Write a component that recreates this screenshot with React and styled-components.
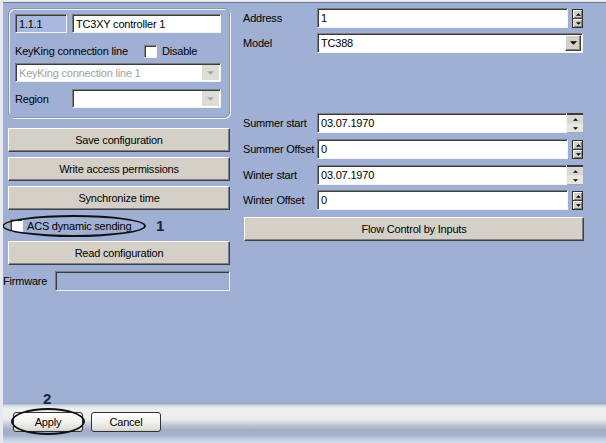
import React from "react";
import styled, { createGlobalStyle } from "styled-components";

const GlobalStyle = createGlobalStyle`
  html, body {
    margin: 0;
    padding: 0;
    background: #9fb0d4;
  }
  * {
    box-sizing: border-box;
  }
`;

const FONT = `"Liberation Sans", Arial, sans-serif`;

const Window = styled.div`
  width: 606px;
  height: 443px;
  background: #9fb0d4;
  border-left: 3px solid #e6eaf0;
  border-top: 2px solid #e6eaf0;
  display: flex;
  flex-direction: column;
  font-family: ${FONT};
  font-size: 11px;
  letter-spacing: -0.2px;
  color: #000;
  overflow: hidden;
`;

const Body = styled.div`
  flex: 1;
  display: flex;
  border-top: 1px solid #6d7892;
`;

const LeftCol = styled.div`
  width: 227px;
  padding-top: 5px;
  display: flex;
  flex-direction: column;
`;

const GroupBox = styled.div`
  margin-left: 5px;
  height: 110px;
  border: 1px solid #8a93a8;
  border-radius: 6px;
  box-shadow: 1px 1px 0 #f4f6fa, inset 1px 1px 0 #f4f6fa;
  padding: 5px 8px 9px 6px;
  display: flex;
  flex-direction: column;
`;

const GroupRow = styled.div`
  display: flex;
  align-items: center;
  gap: ${(p) => p.$gap || 0}px;
  height: ${(p) => p.$h || 19}px;
  margin-top: ${(p) => p.$mt || 0}px;
`;

const Field = styled.div`
  height: ${(p) => p.$h || 20}px;
  flex: ${(p) => (p.$w ? `0 0 ${p.$w}px` : "1 1 auto")};
  min-width: 0;
  background: ${(p) => p.$bg || "#fff"};
  border-top: 1px solid #7c7c7c;
  border-left: 1px solid #7c7c7c;
  border-right: 1px solid #f4f4f4;
  border-bottom: 1px solid #f4f4f4;
  box-shadow: inset 1px 1px 0 #3c3c3c;
  padding-left: 3px;
  padding-right: ${(p) => (p.$combo ? 0 : 3)}px;
  display: flex;
  align-items: center;
  color: ${(p) => (p.$muted ? "#a2a2a2" : "#000")};
  white-space: nowrap;
  overflow: hidden;
`;

const ComboText = styled.span`
  flex: 1;
  overflow: hidden;
`;

const ArrowBox = styled.div`
  flex: 0 0 ${(p) => (p.$flat ? 17 : 16)}px;
  align-self: stretch;
  display: flex;
  align-items: center;
  justify-content: center;
  margin: 1px 1px 1px 0;
  background: ${(p) => (p.$flat ? "#dedcd6" : "#d4d0c8")};
  border-top: 1px solid ${(p) => (p.$flat ? "#dedcd6" : "#fff")};
  border-left: 1px solid ${(p) => (p.$flat ? "#dedcd6" : "#fff")};
  border-right: 1px solid ${(p) => (p.$flat ? "#dedcd6" : "#404040")};
  border-bottom: 1px solid ${(p) => (p.$flat ? "#dedcd6" : "#404040")};
  box-shadow: ${(p) => (p.$flat ? "none" : "inset -1px -1px 0 #808080")};
`;

const Label = styled.span`
  flex: 0 0 ${(p) => p.$w}px;
  margin-left: ${(p) => p.$ml || 0}px;
  white-space: nowrap;
`;

const CheckBox = styled.span`
  display: block;
  flex: 0 0 13px;
  width: 13px;
  height: 13px;
  background: #fff;
  border-top: 1px solid #808080;
  border-left: 1px solid #808080;
  border-right: 1px solid #f4f4f4;
  border-bottom: 1px solid #f4f4f4;
  box-shadow: inset 1px 1px 0 #404040;
`;

const ActionButton = styled.div`
  margin-left: ${(p) => p.$ml ?? 5}px;
  margin-top: ${(p) => p.$mt || 0}px;
  height: ${(p) => p.$h || 24}px;
  width: ${(p) => p.$w || 222}px;
  background: #d4d0c8;
  border-top: 1px solid #fff;
  border-left: 1px solid #fff;
  border-right: 1px solid #404040;
  border-bottom: 1px solid #404040;
  box-shadow: inset -1px -1px 0 #808080;
  display: flex;
  align-items: center;
  justify-content: center;
  white-space: nowrap;
`;

const CheckRow = styled.div`
  position: relative;
  height: 31px;
  display: flex;
  align-items: center;
  gap: 4px;
  padding-left: 7px;
`;

const Ellipse = styled.div`
  position: absolute;
  left: ${(p) => p.$l}px;
  top: ${(p) => p.$t}px;
  width: ${(p) => p.$w}px;
  height: ${(p) => p.$h}px;
  border: 2.5px solid #101010;
  border-radius: 50%;
  pointer-events: none;
`;

const Marker = styled.span`
  position: absolute;
  left: ${(p) => p.$l}px;
  top: ${(p) => p.$t}px;
  font-family: "Liberation Sans", Arial, sans-serif;
  font-weight: bold;
  font-size: 15px;
  letter-spacing: 0;
  color: #1a2240;
`;

const FirmwareRow = styled.div`
  margin-top: 6px;
  display: flex;
  align-items: center;
  height: 20px;
`;

const RightCol = styled.div`
  margin-left: 13px;
  width: 341px;
  padding-top: 5px;
  display: flex;
  flex-direction: column;
`;

const FieldRow = styled.div`
  display: flex;
  align-items: center;
  height: 20px;
  margin-top: ${(p) => p.$mt || 0}px;
`;

const Controls = styled.div`
  flex: 0 0 267px;
  display: flex;
  align-items: center;
  height: 100%;
`;

const Spin3D = styled.div`
  margin-left: 4px;
  margin-right: 1px;
  flex: 0 0 11px;
  height: 19px;
  border: 1px solid #303030;
  display: flex;
  flex-direction: column;
  background: #404040;
  gap: 1px;
`;

const SpinHalf = styled.div`
  flex: 1;
  background: #d4d0c8;
  border-top: 1px solid #fff;
  border-left: 1px solid #fff;
  box-shadow: inset -1px -1px 0 #808080;
  display: flex;
  align-items: center;
  justify-content: center;
`;

const SpinFlat = styled.div`
  flex: 0 0 16px;
  margin-right: 1px;
  height: 20px;
  display: flex;
  flex-direction: column;
  border-top: 2px solid #3a3a3a;
  border-bottom: 1px solid #a8a8a8;
  background: #e6e4de;
  gap: 1px;
`;

const FlatHalf = styled.div`
  flex: 1;
  background: ${(p) => (p.$top ? "#dad8d2" : "#e8e6e0")};
  display: flex;
  align-items: center;
  justify-content: center;
`;

const Footer = styled.div`
  height: 40px;
  padding: 9px 0 0 10px;
  display: flex;
  align-items: flex-start;
  gap: 8px;
  background: linear-gradient(
    to bottom,
    #8896b4 0px,
    #aebbd0 1px,
    #d8e2e8 3px,
    #eef0ef 6px,
    #ebeded 16px,
    #c2c7d6 22px,
    #a4acc6 27px,
    #a6b0ca 32px,
    #c4d2e2 37px,
    #d4e0ea 40px
  );
`;

const ButtonSlot = styled.div`
  position: relative;
`;

const XPButton = styled.div`
  width: 70px;
  height: 20px;
  border: 1px solid #2f3238;
  border-radius: 3px;
  background: linear-gradient(to bottom, #ffffff 0%, #f2f2ee 50%, #e2e2dc 85%, #cfcfc8 100%);
  display: flex;
  align-items: center;
  justify-content: center;
`;

const Tri = ({ dir = "down", color = "#000", w = 7 }) => (
  <svg width={w} height={Math.ceil(w / 2)} viewBox="0 0 8 4" style={{ display: "block" }}>
    {dir === "down" ? (
      <polygon points="0,0 8,0 4,4" fill={color} />
    ) : (
      <polygon points="0,4 8,4 4,0" fill={color} />
    )}
  </svg>
);

const Spinner3D = () => (
  <Spin3D>
    <SpinHalf>
      <Tri dir="up" w={5} />
    </SpinHalf>
    <SpinHalf>
      <Tri w={5} />
    </SpinHalf>
  </Spin3D>
);

const SpinnerFlat = () => (
  <SpinFlat>
    <FlatHalf $top>
      <Tri dir="up" w={5} />
    </FlatHalf>
    <FlatHalf>
      <Tri w={5} />
    </FlatHalf>
  </SpinFlat>
);

const NumberRow = ({ label, value, mt, flat }) => (
  <FieldRow $mt={mt}>
    <Label $w={74}>{label}</Label>
    <Controls>
      <Field>{value}</Field>
      {flat ? <SpinnerFlat /> : <Spinner3D />}
    </Controls>
  </FieldRow>
);

export default function App() {
  return (
    <>
      <GlobalStyle />
      <Window>
        <Body>
          <LeftCol>
            <GroupBox>
              <GroupRow $gap={5}>
                <Field $w={52} $h={19} $bg="#a9b8de">
                  1.1.1
                </Field>
                <Field $h={19}>TC3XY controller 1</Field>
              </GroupRow>
              <GroupRow $mt={11} $h={14}>
                <Label $w={129}>KeyKing connection line</Label>
                <CheckBox />
                <Label $w={40} $ml={5}>
                  Disable
                </Label>
              </GroupRow>
              <GroupRow $mt={5}>
                <Field $h={19} $muted $combo>
                  <ComboText>KeyKing connection line 1</ComboText>
                  <ArrowBox $flat>
                    <Tri color="#a4a4a4" />
                  </ArrowBox>
                </Field>
              </GroupRow>
              <GroupRow $mt={7}>
                <Label $w={57}>Region</Label>
                <Field $h={19} $combo>
                  <ComboText />
                  <ArrowBox $flat>
                    <Tri color="#a4a4a4" />
                  </ArrowBox>
                </Field>
              </GroupRow>
            </GroupBox>

            <ActionButton $mt={10}>Save configuration</ActionButton>
            <ActionButton $mt={5}>Write access permissions</ActionButton>
            <ActionButton $mt={5}>Synchronize time</ActionButton>

            <CheckRow>
              <CheckBox />
              <span>ACS dynamic sending</span>
              <Ellipse $l={-1} $t={5} $w={144} $h={22} />
              <Marker $l={153} $t={7}>
                1
              </Marker>
            </CheckRow>

            <ActionButton>Read configuration</ActionButton>

            <FirmwareRow>
              <Label $w={52}>Firmware</Label>
              <Field $w={175} $bg="#9fb0d4" />
            </FirmwareRow>
          </LeftCol>

          <RightCol>
            <NumberRow label="Address" value="1" />
            <FieldRow $mt={5}>
              <Label $w={74}>Model</Label>
              <Controls>
                <Field $combo style={{ marginRight: 1 }}>
                  <ComboText>TC388</ComboText>
                  <ArrowBox>
                    <Tri />
                  </ArrowBox>
                </Field>
              </Controls>
            </FieldRow>

            <NumberRow label="Summer start" value="03.07.1970" mt={60} flat />
            <NumberRow label="Summer Offset" value="0" mt={6} />
            <NumberRow label="Winter start" value="03.07.1970" mt={6} flat />
            <NumberRow label="Winter Offset" value="0" mt={5} />

            <ActionButton $ml={1} $mt={7} $w={340} $h={24}>
              Flow Control by Inputs
            </ActionButton>
          </RightCol>
        </Body>

        <Footer>
          <ButtonSlot>
            <XPButton>Apply</XPButton>
            <Ellipse $l={-2} $t={-4} $w={74} $h={27} />
            <Marker $l={30} $t={-22}>
              2
            </Marker>
          </ButtonSlot>
          <XPButton>Cancel</XPButton>
        </Footer>
      </Window>
    </>
  );
}
